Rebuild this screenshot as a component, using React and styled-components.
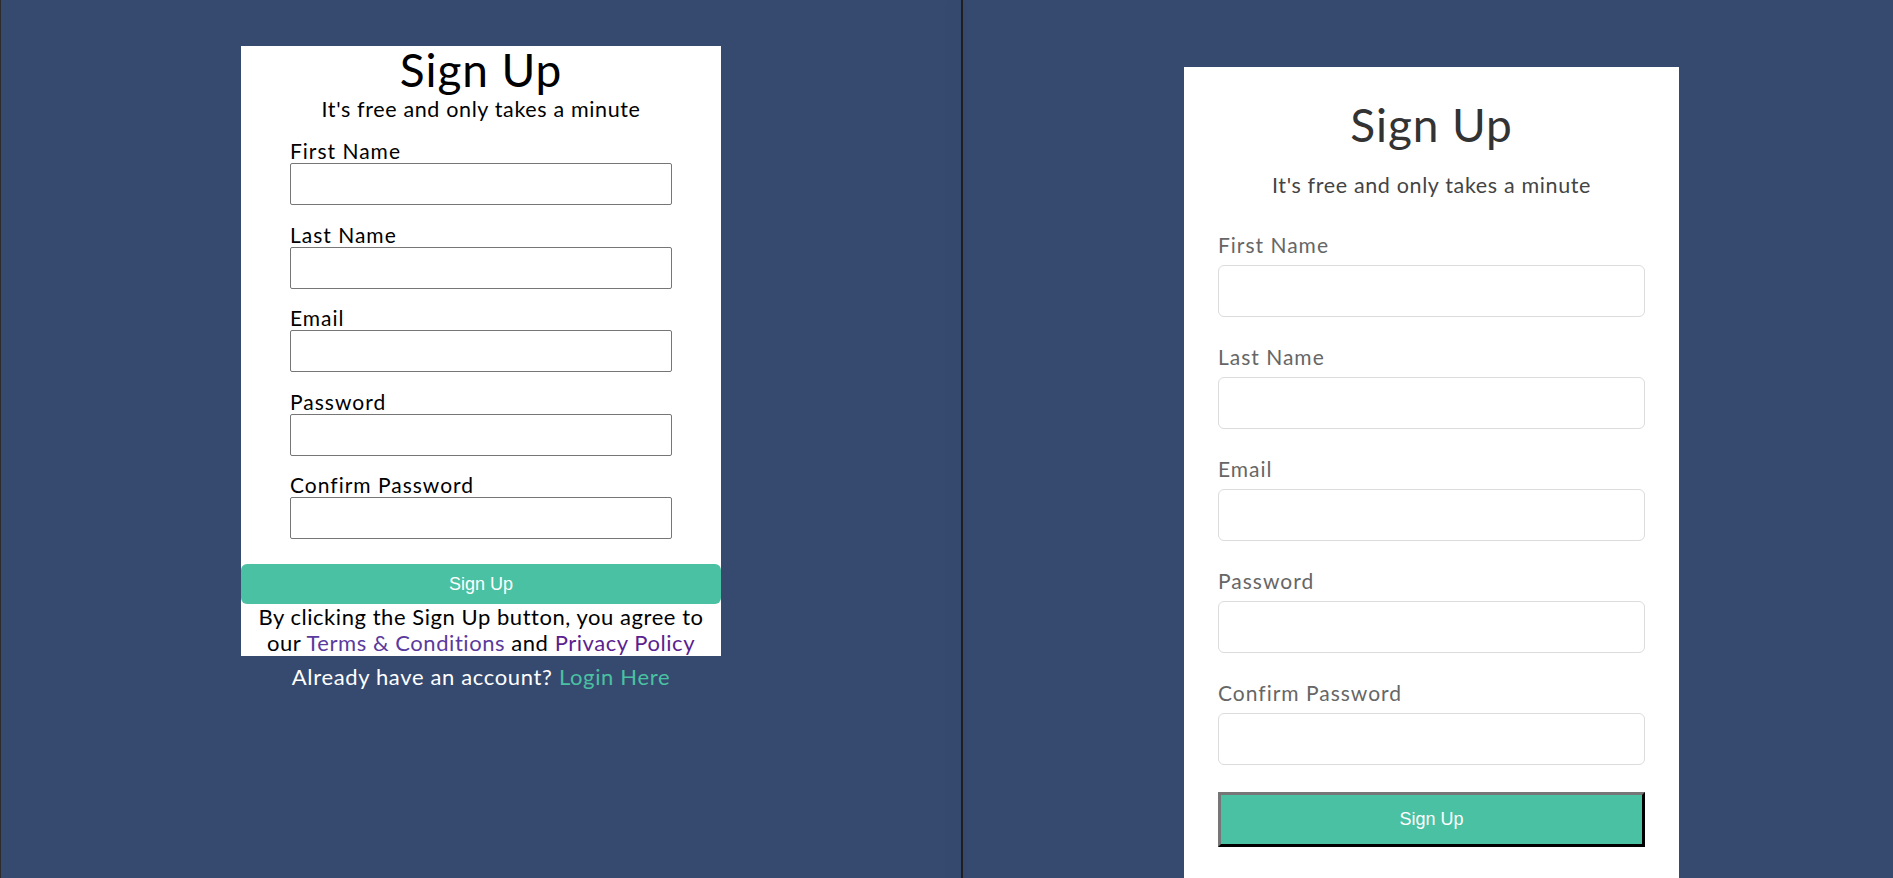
import React from "react";
import styled, { createGlobalStyle } from "styled-components";

const GlobalStyle = createGlobalStyle`
  html, body {
    margin: 0;
    padding: 0;
    background: #364a70;
    font-family: Lato, "Open Sans", sans-serif;
  }
  * { box-sizing: border-box; }
`;

const Page = styled.div`
  display: grid;
  grid-template-columns: 961px 2px 1fr;
  height: 878px;
  overflow: hidden;
  background: #364a70;
`;

const LeftPane = styled.section`
  border-left: 1px solid #2c2c2c;
  display: flex;
  flex-direction: column;
  align-items: center;
  padding-top: 46px;
`;

const Divider = styled.div`
  background: #1f1f1f;
  box-shadow: -6px 0 14px rgba(0, 0, 0, 0.12);
`;

const RightPane = styled.section`
  display: flex;
  justify-content: center;
  align-items: flex-start;
  padding: 67px 0 0 7px;
`;

const Card = styled.div`
  background: #fff;
  display: flex;
  flex-direction: column;
  text-align: center;
  width: ${(p) => (p.$styled ? "495px" : "480px")};
  padding: ${(p) => (p.$styled ? "34px 34px 60px" : "0")};
`;

const Title = styled.h1`
  margin: 0;
  font-size: 46px;
  line-height: 48px;
  font-weight: 400;
  letter-spacing: 0.9px;
  color: ${(p) => (p.$styled ? "#333" : "#000")};
`;

const Subtitle = styled.p`
  margin: ${(p) => (p.$styled ? "21px 0 0" : "0")};
  font-size: 21.5px;
  line-height: 30px;
  letter-spacing: 0.64px;
  color: ${(p) => (p.$styled ? "#444" : "#000")};
`;

const Fields = styled.div`
  display: flex;
  flex-direction: column;
  text-align: left;
  align-self: center;
  width: ${(p) => (p.$styled ? "100%" : "382px")};
  margin-top: ${(p) => (p.$styled ? "33px" : "15px")};
  gap: ${(p) => (p.$styled ? "28px" : "17.5px")};
`;

const Field = styled.label`
  display: flex;
  flex-direction: column;
  gap: ${(p) => (p.$styled ? "8px" : "0")};
`;

const LabelText = styled.span`
  font-size: 21px;
  line-height: 24px;
  letter-spacing: 1px;
  color: ${(p) => (p.$styled ? "#666" : "#000")};
`;

const Input = styled.input`
  display: block;
  width: 100%;
  height: ${(p) => (p.$styled ? "52px" : "42px")};
  border: 1px solid ${(p) => (p.$styled ? "#dcdcdc" : "#767676")};
  border-radius: ${(p) => (p.$styled ? "6px" : "2px")};
  background: #fff;
  font: inherit;
  padding: 0 10px;
  outline: none;
`;

const SubmitButton = styled.button`
  display: block;
  width: 100%;
  margin-top: ${(p) => (p.$styled ? "27px" : "25px")};
  height: ${(p) => (p.$styled ? "55px" : "40px")};
  background: #4ac1a2;
  color: #fff;
  font-family: "Liberation Sans", Arial, sans-serif;
  font-size: 18px;
  border: ${(p) => (p.$styled ? "3px outset #767676" : "none")};
  border-color: ${(p) =>
    p.$styled ? "#767676 #1f1f1f #1f1f1f #767676" : "transparent"};
  border-radius: ${(p) => (p.$styled ? "0" : "6px")};
  cursor: pointer;
`;

const Terms = styled.p`
  margin: 0;
  font-size: 22px;
  line-height: 26px;
  letter-spacing: 0.55px;
  color: #000;
`;

const TermsLink = styled.a`
  color: ${(p) => p.$tone};
  text-decoration: none;
`;

const LoginNote = styled.p`
  margin: 8px 0 0;
  font-size: 22px;
  line-height: 26px;
  letter-spacing: 0.65px;
  color: #fff;
`;

const LoginLink = styled.a`
  color: #4ac1a2;
  text-decoration: none;
`;

const fields = [
  { label: "First Name", type: "text" },
  { label: "Last Name", type: "text" },
  { label: "Email", type: "email" },
  { label: "Password", type: "password" },
  { label: "Confirm Password", type: "password" },
];

function SignUpForm({ styledVariant }) {
  const s = styledVariant;
  return (
    <>
      <Title $styled={s}>Sign Up</Title>
      <Subtitle $styled={s}>It's free and only takes a minute</Subtitle>
      <Fields $styled={s}>
        {fields.map((f) => (
          <Field key={f.label} $styled={s}>
            <LabelText $styled={s}>{f.label}</LabelText>
            <Input $styled={s} type={f.type} />
          </Field>
        ))}
      </Fields>
      <SubmitButton $styled={s} type="button">
        Sign Up
      </SubmitButton>
    </>
  );
}

export default function App() {
  return (
    <>
      <GlobalStyle />
      <Page>
        <LeftPane>
          <Card>
            <SignUpForm styledVariant={false} />
            <Terms>
              By clicking the Sign Up button, you agree to
              <br />
              our <TermsLink href="#" $tone="#5a3a9c">Terms &amp; Conditions</TermsLink> and{" "}
              <TermsLink href="#" $tone="#5b1f8f">Privacy Policy</TermsLink>
            </Terms>
          </Card>
          <LoginNote>
            Already have an account? <LoginLink href="#">Login Here</LoginLink>
          </LoginNote>
        </LeftPane>
        <Divider />
        <RightPane>
          <Card $styled>
            <SignUpForm styledVariant />
          </Card>
        </RightPane>
      </Page>
    </>
  );
}
